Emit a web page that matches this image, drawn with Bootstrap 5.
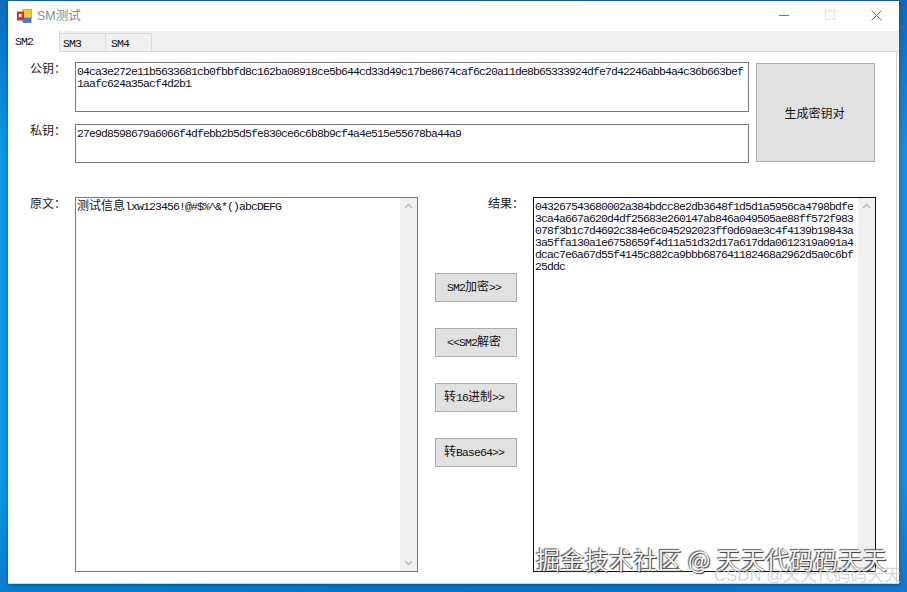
<!DOCTYPE html>
<html lang="zh"><head><meta charset="utf-8"><title>SM测试</title>
<link href="https://cdn.jsdelivr.net/npm/bootstrap@5.3.0/dist/css/bootstrap.min.css" rel="stylesheet">
<style>
html,body{height:592px;overflow:hidden}
body{background:linear-gradient(180deg,rgba(12,70,160,.55) 0,rgba(12,70,160,0) 150px,rgba(12,70,160,0) 480px,rgba(12,70,160,.35) 592px),linear-gradient(90deg,#0a9ae6,#0a8ad8 60%,#1a8ee0);padding:1px 8px 0;font-family:"Noto Sans CJK SC",sans-serif;font-size:12px;color:#111;position:relative}
.win{width:891px;height:583px;background:#fff;box-shadow:0 1px 4px rgba(0,40,90,.55),inset 0 -1px 0 #d4d4d4}
.tbar{height:30px;padding:0 0 0 9px;color:#8a8a8a;font-size:12px}
.tbar .ttl{margin-left:5px;font-family:"Liberation Sans","Noto Sans CJK SC",sans-serif;font-size:12.5px}
.ctrls{margin-left:auto;align-self:flex-start}
.ctrls span{width:46px;height:28px;display:flex;align-items:center;justify-content:center}
.strip{height:21px;background:#f0f0f0;border-bottom:1px solid #d9d9d9;flex-wrap:nowrap;align-items:flex-end}
.strip .nav-link{font-family:"Liberation Mono","Noto Sans CJK SC",monospace;font-size:11.5px;letter-spacing:-.9px;color:#111;padding:0 0 0 3px;border:1px solid #d9d9d9;border-bottom:0;border-left:0;border-radius:0;background:#f0f0f0;height:18px;width:46px;line-height:19px}
.strip .nav-link.first{background:#fff;height:21px;width:52px;border-top:0;margin-bottom:-1px;padding-left:7px;line-height:21px}
.strip .nav-link.third{padding-left:5px}
.pane{padding:10px 0 0 22px;border-right:2px solid #fff;height:531px;box-shadow:inset -1px 0 0 #d4d4d4}
.lbl{width:45px;line-height:12px;flex:none;color:#222}
.txt{flex:none;border:1px solid #7a7a7a;background:#fff;padding:3px 2px 0 1px;font-family:"Liberation Mono",monospace;font-size:11.5px;letter-spacing:-.9px;line-height:12px;color:#111;white-space:pre;overflow:hidden;position:relative}
.txt .cn{font-family:"Noto Sans CJK SC",sans-serif;font-size:12px;letter-spacing:0}
.k1{width:674px;height:50px}
.k2{width:674px;height:39px}
.rowgap{margin-top:12px}
.gen{flex:none;width:119px;height:99px;margin:1px 0 0 7px;background:#e1e1e1;border:1px solid #adadad;border-radius:0;font-size:12px;color:#111;padding:0 2px 0 0}
.gen:hover{background:#e1e1e1;border-color:#adadad;color:#111}
.mainrow{margin-top:34px;height:375px}
.big{width:343px;height:375px}
.orig{padding-top:1px}
.dark{border-color:#111}
.sbar{position:absolute;top:0;right:0;bottom:0;width:17px;background:#f0f0f0;display:flex;flex-direction:column;justify-content:space-between;align-items:center;padding:5px 0}
.mid{flex:none;width:115px;padding-left:17px}
.lbl2{line-height:12px;color:#222;text-align:right;padding-right:9px}
.acts{margin-top:64px;gap:26px}
.act{width:82px;height:29px;background:#e1e1e1;border:1px solid #adadad;border-radius:0;font-family:"Liberation Mono","Noto Sans CJK SC",monospace;font-size:11.5px;letter-spacing:-.9px;color:#111;padding:1px 4px 0 0;white-space:nowrap}
.act:hover{background:#e1e1e1;border-color:#adadad;color:#111}
.act .cn{letter-spacing:0;font-size:12px}
.mark1{position:absolute;left:536px;top:544px;font-size:24px;line-height:30px;color:#f4f4f4;white-space:nowrap;text-shadow:1px 1px 1px #333,-1px -1px 1px #555;letter-spacing:.35px}
.mark2{position:absolute;left:714px;top:567px;font-family:"Liberation Sans","Noto Sans CJK SC",sans-serif;font-size:16.8px;line-height:18px;color:rgba(205,205,205,.85);white-space:nowrap}
</style></head>
<body>
<div class="win d-flex flex-column">
  <div class="tbar d-flex align-items-center">
    <svg width="15" height="14" viewBox="0 0 15 14"><rect x="6" y="0" width="9" height="9" fill="#f4c83a" stroke="#b8892a" stroke-width=".8"/><rect x="0" y="3" width="6.5" height="8" fill="#e8362a" stroke="#a52a20" stroke-width=".8"/><rect x="2" y="5" width="2.5" height="3" fill="#fff"/><rect x="6" y="9.5" width="8" height="4" fill="#4a7fd0" stroke="#2e5aa0" stroke-width=".6"/></svg>
    <span class="ttl">SM测试</span>
    <div class="ctrls d-flex">
      <span><svg width="10" height="10"><path d="M0 5.5h10" stroke="#777" fill="none"/></svg></span>
      <span><svg width="10" height="10"><rect x=".5" y=".5" width="9" height="9" stroke="#e2e2e2" fill="none"/></svg></span>
      <span><svg width="11" height="11"><path d="M.5.5l10 10M10.5.5l-10 10" stroke="#666" fill="none"/></svg></span>
    </div>
  </div>
  <ul class="nav strip">
    <li class="nav-item"><a class="nav-link first" href="#">SM2</a></li>
    <li class="nav-item"><a class="nav-link" href="#">SM3</a></li>
    <li class="nav-item"><a class="nav-link third" href="#">SM4</a></li>
  </ul>
  <div class="pane">
    <div class="d-flex">
      <div>
        <div class="d-flex">
          <div class="lbl">公钥：</div>
          <div class="txt k1">04ca3e272e11b5633681cb0fbbfd8c162ba08918ce5b644cd33d49c17be8674caf6c20a11de8b65333924dfe7d42246abb4a4c36b663bef
1aafc624a35acf4d2b1</div>
        </div>
        <div class="d-flex rowgap">
          <div class="lbl">私钥：</div>
          <div class="txt k2">27e9d8598679a6066f4dfebb2b5d5fe830ce6c6b8b9cf4a4e515e55678ba44a9</div>
        </div>
      </div>
      <button class="btn gen" type="button">生成密钥对</button>
    </div>
    <div class="d-flex mainrow">
      <div class="lbl">原文：</div>
      <div class="txt big orig"><span class="cn">测试信息</span>lxw123456!@#$%^&amp;*()abcDEFG<div class="sbar"><svg width="9" height="6"><path d="M1 5l3.5-3.5L8 5" stroke="#bbb" stroke-width="1.6" fill="none"/></svg><svg width="9" height="6"><path d="M1 1l3.5 3.5L8 1" stroke="#bbb" stroke-width="1.6" fill="none"/></svg></div></div>
      <div class="mid">
        <div class="lbl2">结果：</div>
        <div class="acts d-flex flex-column">
          <button class="btn act" type="button">SM2<span class="cn">加密</span>&gt;&gt;</button>
          <button class="btn act" type="button">&lt;&lt;SM2<span class="cn">解密</span></button>
          <button class="btn act" type="button"><span class="cn">转</span>16<span class="cn">进制</span>&gt;&gt;</button>
          <button class="btn act" type="button"><span class="cn">转</span>Base64&gt;&gt;</button>
        </div>
      </div>
      <div class="txt big dark">043267543680002a384bdcc8e2db3648f1d5d1a5956ca4798bdfe
3ca4a667a620d4df25683e260147ab846a049505ae88ff572f983
078f3b1c7d4692c384e6c045292023ff0d69ae3c4f4139b19843a
3a5ffa130a1e6758659f4d11a51d32d17a617dda0612319a091a4
dcac7e6a67d55f4145c882ca9bbb687641182468a2962d5a0c6bf
25ddc<div class="sbar"><svg width="9" height="6"><path d="M1 5l3.5-3.5L8 5" stroke="#bbb" stroke-width="1.6" fill="none"/></svg></div></div>
    </div>
  </div>
</div>
<div class="mark1">掘金技术社区 @ 天天代码码天天</div>
<div class="mark2">CSDN @天天代码码天天</div>
</body></html>
